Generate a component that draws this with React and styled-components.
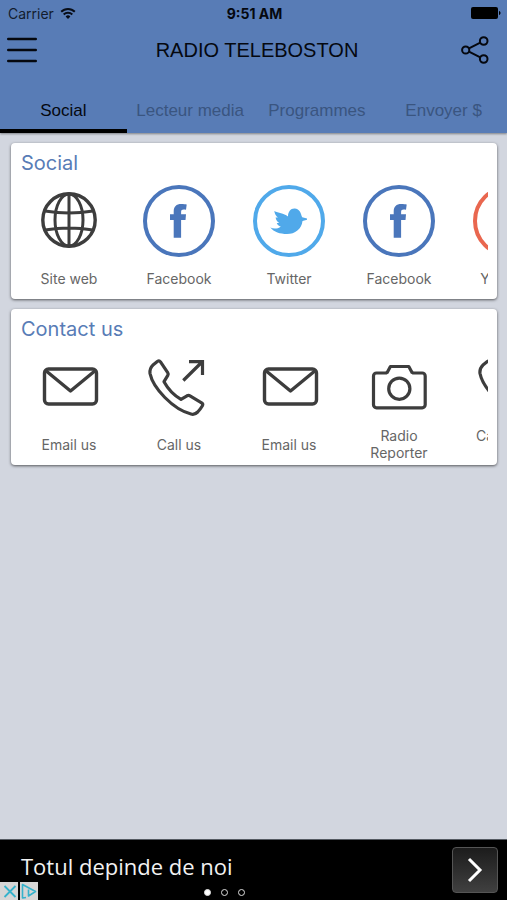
import React from 'react'
import styled, { createGlobalStyle } from 'styled-components'

const tabs = ['Social', 'Lecteur media', 'Programmes', 'Envoyer $']

const sections = [
  {
    id: 'social',
    title: 'Social',
    items: [
      { id: 1, label: 'Site web', icon: 'globe' },
      { id: 2, label: 'Facebook', icon: 'facebook' },
      { id: 3, label: 'Twitter', icon: 'twitter' },
      { id: 4, label: 'Facebook', icon: 'facebook' },
      { id: 5, label: 'YouTube', icon: 'youtube' },
    ],
  },
  {
    id: 'contact',
    title: 'Contact us',
    items: [
      { id: 1, label: 'Email us', icon: 'mail' },
      { id: 2, label: 'Call us', icon: 'call' },
      { id: 3, label: 'Email us', icon: 'mail' },
      { id: 4, label: 'Radio Reporter', icon: 'camera' },
      { id: 5, label: 'Call Radio Now', icon: 'call' },
    ],
  },
]

const icons = {
  globe: (
    <g fill='none' stroke='#3d3d3d' strokeWidth='3'>
      <circle cx='36' cy='35' r='26.2' strokeWidth='3.4' />
      <ellipse cx='36' cy='35' rx='14' ry='26' />
      <path d='M36 9v52M12 26Q36 30 60 26M12 45Q36 41 60 45' />
    </g>
  ),
  facebook: (
    <>
      <circle cx='36' cy='36' r='34' fill='none' stroke='#4a76bb' strokeWidth='4' />
      <path
        d='M30.700 52.800V35H27v-5.700h3.700v-2.800c0-5 2.600-7.500 7.600-7.500 2.200 0 4.200.2 5.400.6l-.7 5.200c-3.300-.6-4.900-.1-4.900 2.200v2.300h4.900l-.5 5.700h-4.400v17.800z'
        fill='#4a76bb'
      />
    </>
  ),
  twitter: (
    <>
      <circle cx='36' cy='36' r='34' fill='none' stroke='#50a9ea' strokeWidth='4' />
      <path
        d='M17.300 42.500c3 1.500 7 1.700 10.500-.8-2-.6-3.500-2-4-3.700h2.500c-2-1.200-3.300-3-3.700-5.500h2.300c-2-1.500-3.200-3.500-3.600-6.500C25.500 28 30.500 28 35 31.500c0-5 3-8.500 7-8 3 .3 5 2.300 6 5.500.5 1.500.8 2.500 1.200 3.300l4.800 1.200v1.200l-4.500 1.200C48.500 44 42 49 34 49c-7 0-13-2-16.700-6.500z'
        fill='#50a9ea'
      />
    </>
  ),
  youtube: (
    <>
      <circle cx='36' cy='36' r='34' fill='none' stroke='#e9674f' strokeWidth='4' />
      <path d='M29 25l18 11-18 11z' fill='#e9674f' />
    </>
  ),
  mail: (
    <g fill='none' stroke='#3d3d3d' strokeWidth='3.400' strokeLinejoin='round'>
      <rect x='11.500' y='18' width='52' height='35' rx='4' />
      <path d='M12 19l25.500 21L63 19' />
    </g>
  ),
  call: (
    <g fill='none' stroke='#3d3d3d' strokeWidth='3.200' strokeLinejoin='round'>
      <path d='M10.300 13.700l4-3.200c1.300-.9 2.300-.8 3.200.4l7.200 10.700c.7 1 .7 1.800.1 2.800L21 30.700C25 38 31 44.300 38 48.300l6-3.500c1.200-.6 2-.6 3 0l11.600 7c1.200.8 1.500 1.700.8 2.900-1.500 2.500-2.800 4.300-4.700 6.300-2 2-4 2.800-6.700 2C30 58.500 10 37 7 22.500c-.5-3.500.8-6.300 3.300-8.800z' />
      <path d='M40.300 29.500L59 11M46 10.700h13.500V24' strokeLinejoin='miter' />
    </g>
  ),
  camera: (
    <g fill='none' stroke='#3d3d3d' strokeWidth='3.200' strokeLinejoin='round'>
      <path d='M13.500 22H23l1.200-.6 3.200-5.900h18.400l3.200 5.900 1.200.6h9a3 3 0 0 1 3 3v28.800a3 3 0 0 1-3 3H13.500a3 3 0 0 1-3-3V25a3 3 0 0 1 3-3z' />
      <circle cx='36.300' cy='37.700' r='10.600' />
    </g>
  ),
}

const StatusBar = () => (
  <Status>
    <Carrier>
      Carrier
      <svg width='16' height='13' viewBox='0 0 16 13' fill='none' stroke='#080d18' strokeWidth='2'>
        <path d='M1.200 4.800a9.600 9.600 0 0 1 13.600 0M3.700 7.500a6.100 6.100 0 0 1 8.600 0' />
        <path d='M8 12L5.600 9.500a3.400 3.400 0 0 1 4.800 0z' fill='#080d18' stroke='none' />
      </svg>
    </Carrier>
    <Clock>9:51 AM</Clock>
    <Battery>
      <svg width='30' height='12' viewBox='0 0 30 12'>
        <rect width='27' height='12' rx='2' />
        <path d='M28 4c2 .6 2 3.400 0 4z' />
      </svg>
    </Battery>
  </Status>
)

const App = () => {
  return (
    <Page>
      <GlobalStyle />
      <Header>
        <StatusBar />
        <TitleBar>
          <IconButton type='button' aria-label='Menu'>
            <svg width='30' height='26' viewBox='0 0 30 26' stroke='#05080f' strokeWidth='2.400' strokeLinecap='round'>
              <path d='M1.200 2h27.600M1.200 13h27.600M1.200 24h27.600' />
            </svg>
          </IconButton>
          <h1>RADIO TELEBOSTON</h1>
          <IconButton type='button' aria-label='Share'>
            <svg width='28' height='28' viewBox='0 0 28 28' fill='none' stroke='#05080f' strokeWidth='2'>
              <circle cx='4.700' cy='14' r='3.600' />
              <circle cx='22.700' cy='5' r='3.800' />
              <circle cx='22.700' cy='23' r='3.800' />
              <path d='M8 12.400l11.300-5.700M8 15.600l11.300 5.700' />
            </svg>
          </IconButton>
        </TitleBar>
        <Tabs>
          {tabs.map((tab, index) => (
            <Tab key={tab} type='button' $active={index === 0}>
              {tab}
            </Tab>
          ))}
        </Tabs>
      </Header>
      <Main>
        {sections.map(({ id, title, items }) => (
          <Card key={id}>
            <h2>{title}</h2>
            <Shelf>
              {items.map((item) => (
                <Tile key={item.id} href={`#${id}-${item.id}`}>
                  <svg width='72' height='72' viewBox='0 0 72 72'>
                    {icons[item.icon]}
                  </svg>
                  <span>{item.label}</span>
                </Tile>
              ))}
            </Shelf>
          </Card>
        ))}
      </Main>
      <Banner>
        <p>Totul depinde de noi</p>
        <NextButton type='button' aria-label='Next'>
          <svg width='16' height='26' viewBox='0 0 16 26' fill='none' stroke='#fff' strokeWidth='3'>
            <path d='M2 2l11 11L2 24' />
          </svg>
        </NextButton>
        <AdBadge>
          <button type='button' aria-label='Close ad'>
            <svg width='18' height='18' viewBox='0 0 18 18' stroke='#35b2cc' strokeWidth='1.800'>
              <path d='M4.500 4l11 11M15.500 4l-11 11' />
            </svg>
          </button>
          <button type='button' aria-label='Ad choices'>
            <svg width='18' height='18' viewBox='0 0 18 18' fill='none' stroke='#35b2cc' strokeWidth='1.600' strokeLinejoin='round'>
              <path d='M6 15.500l-3.500.5V2.500L15.500 9.500 8.500 14V7.500' />
            </svg>
          </button>
        </AdBadge>
        <Dots>
          <Dot $active />
          <Dot />
          <Dot />
        </Dots>
      </Banner>
    </Page>
  )
}

const GlobalStyle = createGlobalStyle`
  * {
    box-sizing: border-box;
    margin: 0;
    padding: 0;
  }

  body {
    background: #d2d6df;
    font-family: Inter, 'Liberation Sans', sans-serif;
  }

  button {
    border: 0;
    background: transparent;
    font: inherit;
    cursor: pointer;
  }

  svg {
    display: block;
    flex-shrink: 0;
  }
`

const Page = styled.div`
  min-height: 100vh;
  display: flex;
  flex-direction: column;
`

const Header = styled.header`
  background: #587cb6;
  color: #05080f;
  box-shadow: 0 1px 2px rgba(0, 0, 0, 0.4);
`

const Status = styled.div`
  height: 28px;
  padding: 0 6px 2px 8px;
  display: grid;
  grid-template-columns: 1fr auto 1fr;
  align-items: center;
  font-size: 14px;
`

const Carrier = styled.span`
  display: flex;
  align-items: center;
  gap: 6px;
  color: #131c2e;
`

const Clock = styled.time`
  font-weight: 700;
`

const Battery = styled.span`
  justify-self: end;
`

const TitleBar = styled.div`
  height: 44px;
  padding: 0 18px 0 7px;
  display: flex;
  align-items: center;

  h1 {
    flex: 1;
    padding-left: 16px;
    font-family: 'Liberation Sans', Arial, sans-serif;
    font-size: 20px;
    font-weight: 400;
    text-align: center;
  }
`

const IconButton = styled.button`
  flex-shrink: 0;
`

const Tabs = styled.nav`
  height: 61px;
  display: flex;
  align-items: stretch;
`

const Tab = styled.button`
  flex: 1;
  padding-top: 21px;
  border-bottom: 4px solid ${({ $active }) => ($active ? '#000' : 'transparent')};
  font-family: 'Liberation Sans', Arial, sans-serif;
  font-size: 17px;
  color: ${({ $active }) => ($active ? '#05080f' : '#3a5580')};
  white-space: nowrap;
`

const Main = styled.main`
  flex: 1;
  padding: 10px 10px 10px 11px;
  display: flex;
  flex-direction: column;
  gap: 10px;
`

const Card = styled.section`
  padding: 8px 9px 4px;
  border-radius: 4px;
  background: #fff;
  box-shadow: 0 1px 3px rgba(0, 0, 0, 0.6);

  h2 {
    margin: 0 0 10px 1px;
    font-size: 20px;
    line-height: 24px;
    font-weight: 400;
    color: #587cb6;
  }
`

const Shelf = styled.div`
  display: flex;
  gap: 12px;
  overflow: hidden;
`

const Tile = styled.a`
  flex: 0 0 98px;
  display: flex;
  flex-direction: column;
  align-items: center;
  gap: 4px;
  color: #666;
  text-decoration: none;

  span {
    height: 34px;
    display: flex;
    align-items: center;
    font-size: 14px;
    line-height: 17px;
    text-align: center;
  }
`

const Banner = styled.footer`
  position: relative;
  height: 61px;
  padding: 0 9px 0 21px;
  display: flex;
  align-items: center;
  justify-content: space-between;
  border-top: 1px solid #555a62;
  background: #000;
  color: #f2f2f2;

  p {
    padding-bottom: 8px;
    font-family: 'Open Sans', sans-serif;
    font-size: 22px;
  }
`

const NextButton = styled.button`
  width: 46px;
  height: 46px;
  display: grid;
  place-items: center;
  border: 1px solid #555;
  border-radius: 4px;
  background: linear-gradient(#1c1c1c, #404040);
`

const AdBadge = styled.div`
  position: absolute;
  left: 0;
  bottom: 0;
  display: flex;
  gap: 2px;

  button {
    background: #d6d6d6;
  }
`

const Dots = styled.div`
  position: absolute;
  left: 204px;
  bottom: 4px;
  display: flex;
  gap: 10px;
`

const Dot = styled.span`
  width: 7px;
  height: 7px;
  border: 1px solid #ddd;
  border-radius: 50%;
  background: ${({ $active }) => ($active ? '#fff' : 'transparent')};
`

export default App
